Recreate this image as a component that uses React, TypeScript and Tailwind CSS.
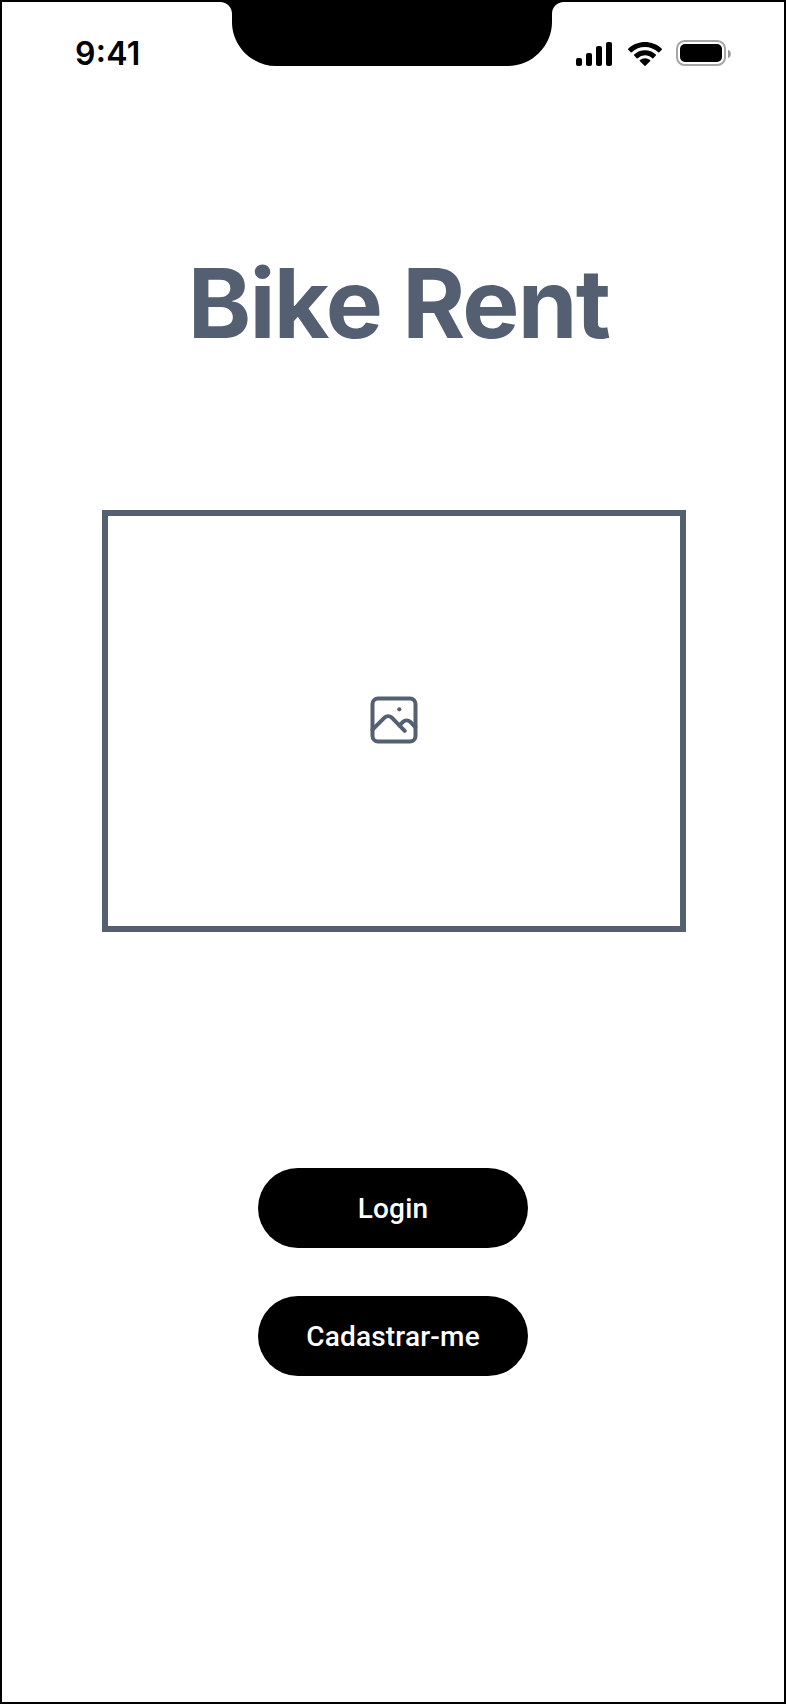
const SignalIcon = () => (
  <svg width="36" height="24" viewBox="0 0 36 24" fill="black">
    <rect x="0" y="16" width="6" height="8" rx="2" />
    <rect x="10" y="11" width="6" height="13" rx="2" />
    <rect x="20" y="4" width="6" height="20" rx="2" />
    <rect x="30" y="0" width="6" height="24" rx="2" />
  </svg>
);

const WifiIcon = () => (
  <svg width="34" height="24" viewBox="0 0 17 12" fill="black">
    <path d="M8.5 2.47c2.47 0 4.84.96 6.63 2.69a.34.34 0 0 0 .48 0l1.28-1.31a.36.36 0 0 0 0-.52C12.2-1.1 4.8-1.1.11 3.33a.36.36 0 0 0 0 .52L1.4 5.16a.34.34 0 0 0 .48 0A9.58 9.58 0 0 1 8.5 2.47Z" />
    <path d="M8.5 6.68c1.35 0 2.65.51 3.65 1.42.14.14.35.13.49 0l1.29-1.33a.37.37 0 0 0-.01-.53 7.9 7.9 0 0 0-10.84 0 .37.37 0 0 0 0 .53l1.28 1.33c.14.13.35.14.49 0a5.42 5.42 0 0 1 3.65-1.42Z" />
    <path d="M11.02 9.59a.36.36 0 0 0-.01-.54 3.93 3.93 0 0 0-5.02 0 .36.36 0 0 0-.01.54l2.28 2.3a.34.34 0 0 0 .48 0Z" />
  </svg>
);

const BatteryIcon = () => (
  <svg width="55" height="26" viewBox="0 0 55 26">
    <rect x="1" y="1" width="48" height="24" rx="7.6" fill="none" stroke="#a6a6a6" strokeWidth="2" />
    <rect x="4" y="4" width="42" height="18" rx="5" fill="black" />
    <path d="M52 9.8v8.2a4.4 4.4 0 0 0 0-8.2Z" fill="#999" />
  </svg>
);

const Notch = () => (
  <svg className="absolute left-[218px] top-0" width="348" height="66" viewBox="0 0 348 66">
    <path
      d="M0 0V2H2C9 2 14 7 14 14V22C14 46 34 66 58 66H290C314 66 334 46 334 22V14C334 7 339 2 346 2H348V0Z"
      fill="black"
    />
  </svg>
);

const ImageIcon = () => (
  <svg
    width="48"
    height="48"
    viewBox="0 0 48 48"
    fill="none"
    stroke="#545f71"
    strokeWidth="4"
    strokeLinecap="round"
    strokeLinejoin="round"
  >
    <rect x="2.5" y="2.5" width="43" height="43" rx="5.5" />
    <path d="M2.5 33.7L14.5 21.7a5.2 5.2 0 0 1 7.3 0L34.7 34.9" />
    <path d="M29.5 29.4L33 25.9a5.2 5.2 0 0 1 7.3 0L45.3 31" />
    <circle cx="29.3" cy="13.3" r="2.1" fill="#545f71" stroke="none" />
  </svg>
);

const PillButton = ({ label }: { label: string }) => (
  <button className="flex h-20 w-[270px] items-center justify-center rounded-full bg-black pt-0.5 font-['Roboto',sans-serif] text-[28px] font-medium tracking-[0.2px] text-white">
    {label}
  </button>
);

export default function App() {
  return (
    <main className="relative flex h-[1704px] w-[786px] flex-col items-center border-2 border-black bg-white">
      <header className="flex h-[100px] w-full items-start justify-between pl-[73px] pr-[53px]">
        <span className="mt-8 font-['Inter',sans-serif] text-[32px] font-[560] leading-10 tracking-[0.3px] text-black [font-feature-settings:'case']">
          9:41
        </span>
        <div className="mt-[38px] flex items-center">
          <span className="mt-0.5">
            <SignalIcon />
          </span>
          <span className="ml-4 mt-0.5">
            <WifiIcon />
          </span>
          <span className="ml-[14px]">
            <BatteryIcon />
          </span>
        </div>
      </header>
      <div className="absolute -left-0.5 -top-0.5">
        <Notch />
      </div>
      <h1 className="mt-[143px] whitespace-nowrap pl-[11px] font-['Inter',sans-serif] text-[96px] font-bold leading-[116px] tracking-[-0.018em] text-[#545f71]">
        Bike Rent
      </h1>
      <div className="mt-[149px] flex h-[422px] w-[584px] translate-x-px items-center justify-center border-[6px] border-[#545f71]">
        <div className="-mt-0.5">
          <ImageIcon />
        </div>
      </div>
      <div className="mt-[236px] flex flex-col gap-12">
        <PillButton label="Login" />
        <PillButton label="Cadastrar-me" />
      </div>
    </main>
  );
}
